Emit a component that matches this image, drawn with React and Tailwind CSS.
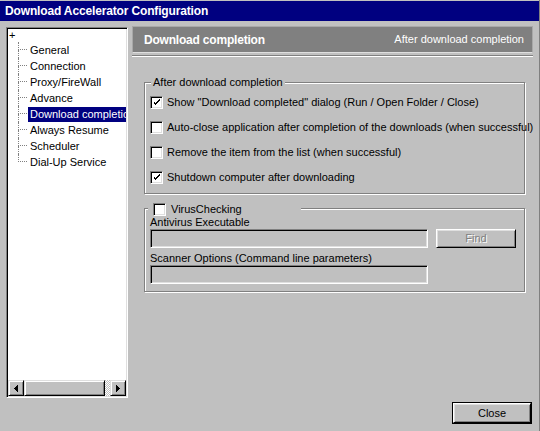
import React from "react";

const treeItems = [
  "General",
  "Connection",
  "Proxy/FireWall",
  "Advance",
  "Download completion",
  "Always Resume",
  "Scheduler",
  "Dial-Up Service",
];

const options = [
  { label: 'Show "Download completed" dialog (Run / Open Folder / Close)', checked: true },
  { label: "Auto-close application after completion of the downloads (when successful)", checked: false },
  { label: "Remove the item from the list (when successful)", checked: false },
  { label: "Shutdown computer after downloading", checked: true },
];

function CheckBox({ checked }) {
  return (
    <div className="w-[13px] h-[13px] shrink-0 bg-white border border-t-[#808080] border-l-[#808080] border-b-white border-r-white shadow-[inset_1px_1px_0_#000,inset_-1px_-1px_0_#dfdfdf] flex items-center justify-center">
      {checked && (
        <svg width="7" height="7" viewBox="0 0 7 7" shapeRendering="crispEdges">
          <path d="M0 2h1v3h1v1h1v-1h1v-1h1v-1h1v-1h1v-2h-1v1h-1v1h-1v1h-1v1h-1v-1h-1v-1z" fill="#000" />
        </svg>
      )}
    </div>
  );
}

function Arrow({ dir }) {
  return (
    <div className="w-[16px] h-[16px] shrink-0 bg-[#c0c0c0] border border-t-[#dfdfdf] border-l-[#dfdfdf] border-b-black border-r-black shadow-[inset_1px_1px_0_#fff,inset_-1px_-1px_0_#808080] flex items-center justify-center">
      <svg width="4" height="7" viewBox="0 0 4 7" shapeRendering="crispEdges">
        {dir === "left" ? (
          <path d="M3 0h1v7h-1zM2 1h1v5h-1zM1 2h1v3h-1zM0 3h1v1h-1z" fill="#000" />
        ) : (
          <path d="M0 0h1v7h-1zM1 1h1v5h-1zM2 2h1v3h-1zM3 3h1v1h-1z" fill="#000" />
        )}
      </svg>
    </div>
  );
}

export default function App() {
  return (
    <div
      className="w-[540px] h-[431px] bg-[#c0c0c0] flex flex-col overflow-hidden text-[11px] text-black border-r border-r-[#808080]"
      style={{ fontFamily: '"Liberation Sans", Arial, sans-serif' }}
    >
      {/* Title bar */}
      <div className="mt-[1px] h-[20px] bg-[#000080] text-white font-bold text-[12px] flex items-center pl-[5px] tracking-[-0.15px]">
        Download Accelerator Configuration
      </div>

      <div className="flex items-start pt-[5px] h-[377px]">
        {/* Tree */}
        <div className="mt-[1px] ml-[6px] w-[122px] h-[371px] bg-white border border-t-[#808080] border-l-[#808080] border-b-white border-r-white shadow-[inset_1px_1px_0_#000,inset_-1px_-1px_0_#dfdfdf] p-[1px] flex flex-col">
          <div className="flex-1 overflow-hidden">
            <div className="h-[13px] pl-[1px] leading-[13px]">+</div>
            {treeItems.map((item, i) => {
              const last = i === treeItems.length - 1;
              const selected = item === "Download completion";
              return (
                <div key={item} className="flex h-[16px] items-stretch">
                  <div className="w-[10px] shrink-0" />
                  <div className="w-[9px] shrink-0 flex flex-col">
                    <div className="h-[8px] border-l border-b border-dotted border-[#808080]" />
                    <div className={`h-[8px] ${last ? "" : "border-l border-dotted border-[#808080]"}`} />
                  </div>
                  <div
                    className={`shrink-0 whitespace-nowrap px-[2px] ml-[1px] leading-[15px] h-[15px] mt-[1px] ${
                      selected ? "bg-[#000080] text-white" : ""
                    }`}
                  >
                    {item}
                  </div>
                </div>
              );
            })}
          </div>
          {/* Horizontal scrollbar */}
          <div className="h-[16px] flex">
            <Arrow dir="left" />
            <div className="w-[81px] bg-[#c0c0c0] border border-t-[#dfdfdf] border-l-[#dfdfdf] border-b-black border-r-black shadow-[inset_1px_1px_0_#fff,inset_-1px_-1px_0_#808080]" />
            <div className="flex-1 bg-[repeating-conic-gradient(#fff_0_25%,#c0c0c0_0_50%)] bg-[length:2px_2px]" />
            <Arrow dir="right" />
          </div>
        </div>

        {/* Right panel */}
        <div className="ml-[4px] w-[401px] flex flex-col">
          <div className="h-[27px] bg-[#808080] border border-[#a8a8a8] border-b-[#dfdfdf] text-white flex items-center justify-between pl-[11px] pr-[8px]">
            <span className="font-bold text-[12px] tracking-[-0.2px]">Download completion</span>
            <span>After download completion</span>
          </div>
          <div className="mt-[2px] h-[2px] border-t border-t-[#808080] border-b border-b-white" />

          {/* Group 1 */}
          <div className="relative mt-[25px] ml-[12px] w-[381px] h-[112px] border border-[#808080] shadow-[inset_1px_1px_0_#fff,1px_1px_0_#fff] pt-[12px] pl-[5px] flex flex-col gap-[11px]">
            <span className="absolute left-[6px] -top-[7px] bg-[#c0c0c0] px-[2px] leading-[13px]">
              After download completion
            </span>
            {options.map((o) => (
              <div key={o.label} className="h-[14px] flex items-center gap-[4px] whitespace-nowrap">
                <CheckBox checked={o.checked} />
                <span>{o.label}</span>
              </div>
            ))}
          </div>

          {/* Group 2 */}
          <div className="relative mt-[14px] ml-[12px] w-[381px] h-[84px] border border-[#808080] shadow-[inset_1px_1px_0_#fff,1px_1px_0_#fff] pt-[7px] pl-[5px] flex flex-col">
            <div className="absolute left-[3px] -top-[7px] w-[153px] h-[14px] bg-[#c0c0c0] flex items-center gap-[5px] pl-[5px]">
              <CheckBox checked={false} />
              <span>VirusChecking</span>
            </div>
            <div className="h-[13px] leading-[13px]">Antivirus Executable</div>
            <div className="flex">
              <div className="w-[278px] h-[19px] bg-[#c0c0c0] border border-t-[#808080] border-l-[#808080] border-b-white border-r-white shadow-[inset_1px_1px_0_#000,inset_-1px_-1px_0_#dfdfdf]" />
              <div className="ml-[8px] w-[80px] h-[19px] bg-[#c0c0c0] border border-t-white border-l-white border-b-black border-r-black shadow-[inset_1px_1px_0_#dfdfdf,inset_-1px_-1px_0_#808080] flex items-center justify-center text-[#808080] [text-shadow:1px_1px_0_#fff]">
                Find
              </div>
            </div>
            <div className="mt-[4px] h-[13px] leading-[13px]">Scanner Options (Command line parameters)</div>
            <div className="w-[278px] h-[19px] bg-[#c0c0c0] border border-t-[#808080] border-l-[#808080] border-b-white border-r-white shadow-[inset_1px_1px_0_#000,inset_-1px_-1px_0_#dfdfdf]" />
          </div>
        </div>
      </div>

      {/* Bottom buttons */}
      <div className="flex justify-end pr-[7px] mt-[4px]">
        <div className="w-[80px] h-[22px] border border-black bg-[#c0c0c0] flex">
          <div className="flex-1 border border-t-white border-l-white border-b-black border-r-black shadow-[inset_1px_1px_0_#dfdfdf,inset_-1px_-1px_0_#808080] flex items-center justify-center">
            Close
          </div>
        </div>
      </div>
    </div>
  );
}
